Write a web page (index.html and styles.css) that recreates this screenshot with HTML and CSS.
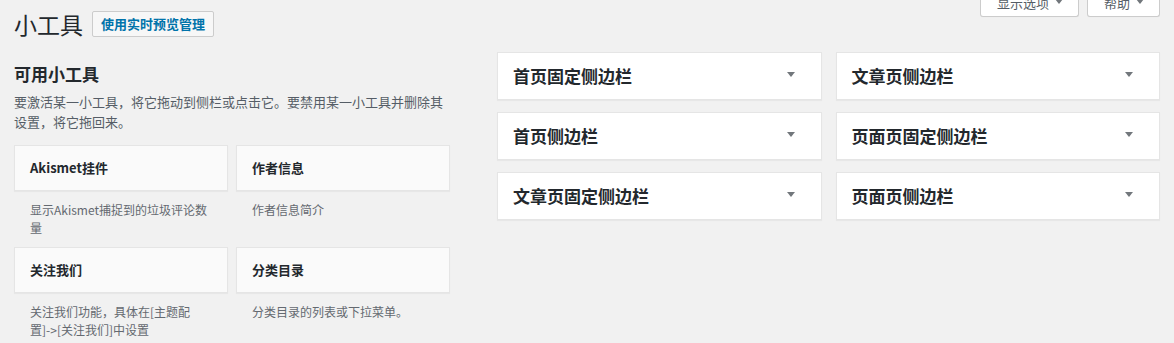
FILE: index.html
```html
<!DOCTYPE html>
<html lang="zh-CN">
<head>
<meta charset="utf-8">
<title>小工具</title>
<link rel="stylesheet" href="styles.css">
</head>
<body>
<div class="wrap">
  <div class="meta-links">
    <button class="meta-tab">显示选项<svg class="tab-arrow" viewBox="0 0 8 5" width="8" height="5"><polygon points="0,0 8,0 4,5"/></svg></button>
    <button class="meta-tab">帮助<svg class="tab-arrow" viewBox="0 0 8 5" width="8" height="5"><polygon points="0,0 8,0 4,5"/></svg></button>
  </div>
  <div class="page-header">
    <h1 class="page-title">小工具</h1>
    <a class="title-action" href="#">使用实时预览管理</a>
  </div>

  <div class="widgets-layout">
    <section class="available">
      <h2 class="section-title">可用小工具</h2>
      <p class="section-desc">要激活某一小工具，将它拖动到侧栏或点击它。要禁用某一小工具并删除其设置，将它拖回来。</p>
      <div class="widget-list">
        <div class="widget">
          <h3 class="widget-title">Akismet挂件</h3>
          <p class="widget-desc">显示Akismet捕捉到的垃圾评论数量</p>
        </div>
        <div class="widget">
          <h3 class="widget-title">作者信息</h3>
          <p class="widget-desc">作者信息简介</p>
        </div>
        <div class="widget">
          <h3 class="widget-title">关注我们</h3>
          <p class="widget-desc">关注我们功能，具体在[主题配<br>置]-&gt;[关注我们]中设置</p>
        </div>
        <div class="widget">
          <h3 class="widget-title">分类目录</h3>
          <p class="widget-desc">分类目录的列表或下拉菜单。</p>
        </div>
      </div>
    </section>

    <section class="sidebars">
      <div class="sidebar-box"><h2 class="sidebar-name">首页固定侧边栏</h2><svg class="sb-arrow" viewBox="0 0 8 5" width="8" height="5"><polygon points="0,0 8,0 4,5"/></svg></div>
      <div class="sidebar-box"><h2 class="sidebar-name">文章页侧边栏</h2><svg class="sb-arrow" viewBox="0 0 8 5" width="8" height="5"><polygon points="0,0 8,0 4,5"/></svg></div>
      <div class="sidebar-box"><h2 class="sidebar-name">首页侧边栏</h2><svg class="sb-arrow" viewBox="0 0 8 5" width="8" height="5"><polygon points="0,0 8,0 4,5"/></svg></div>
      <div class="sidebar-box"><h2 class="sidebar-name">页面页固定侧边栏</h2><svg class="sb-arrow" viewBox="0 0 8 5" width="8" height="5"><polygon points="0,0 8,0 4,5"/></svg></div>
      <div class="sidebar-box"><h2 class="sidebar-name">文章页固定侧边栏</h2><svg class="sb-arrow" viewBox="0 0 8 5" width="8" height="5"><polygon points="0,0 8,0 4,5"/></svg></div>
      <div class="sidebar-box"><h2 class="sidebar-name">页面页侧边栏</h2><svg class="sb-arrow" viewBox="0 0 8 5" width="8" height="5"><polygon points="0,0 8,0 4,5"/></svg></div>
    </section>
  </div>
</div>
</body>
</html>
```

FILE: styles.css
```css
* { box-sizing: border-box; }

html, body {
  margin: 0;
  padding: 0;
  background: #f1f1f1;
  color: #23282d;
  font-family: "Noto Sans CJK SC", "Liberation Sans", sans-serif;
  font-size: 13px;
  overflow: hidden;
}

.wrap {
  padding: 0 14px;
}

.meta-links {
  float: right;
  display: flex;
  gap: 8px;
  margin-top: -11px;
}

.meta-tab {
  display: flex;
  align-items: center;
  height: 28px;
  padding: 0 15px 1px 16px;
  margin: 0;
  background: #fff;
  border: 1px solid #ccc;
  border-top: none;
  border-radius: 0 0 3px 3px;
  box-shadow: 0 1px 1px -1px rgba(0,0,0,.1);
  color: #555d66;
  font-family: inherit;
  font-size: 13px;
  line-height: 27px;
  gap: 6px;
}

.tab-arrow { fill: #72777c; margin-top: -2px; }

.page-header {
  display: flex;
  align-items: center;
  gap: 9px;
  padding-top: 10px;
}

.page-title {
  margin: 0;
  font-size: 23px;
  font-weight: 400;
  line-height: 29px;
  color: #23282d;
}

.title-action {
  display: block;
  padding: 4px 8px;
  border: 1px solid #ccc;
  border-radius: 2px;
  background: #f7f7f7;
  color: #0073aa;
  font-size: 13px;
  font-weight: 700;
  line-height: 16px;
  text-decoration: none;
  margin-top: -2px;
}

.widgets-layout {
  display: flex;
  gap: 47px;
  margin-top: 13px;
}

.available {
  width: 436px;
  flex: none;
}

.section-title {
  margin: 10px 0 0;
  font-size: 17px;
  font-weight: 700;
  line-height: 24px;
  color: #23282d;
}

.section-desc {
  margin: 6px 0 0;
  font-size: 13px;
  line-height: 20px;
  color: #555d66;
}

.widget-list {
  display: grid;
  grid-template-columns: 214px 214px;
  column-gap: 8px;
  margin-top: 13px;
}

.widget-title {
  margin: 0;
  padding: 15px 15px;
  background: #fafafa;
  border: 1px solid #e5e5e5;
  box-shadow: 0 1px 1px rgba(0,0,0,.04);
  font-size: 13px;
  font-weight: 700;
  line-height: 14px;
  color: #23282d;
}

.widget-desc {
  margin: 0;
  padding: 10px 18px 10px 16px;
  font-size: 12px;
  line-height: 18px;
  color: #646970;
}

.sidebars {
  flex: 1;
  display: grid;
  grid-template-columns: 1fr 1fr;
  column-gap: 14px;
  row-gap: 12px;
  align-content: start;
}

.sidebar-box {
  display: flex;
  align-items: center;
  justify-content: space-between;
  height: 48px;
  padding: 0 26px 0 15px;
  background: #fff;
  border: 1px solid #e5e5e5;
  box-shadow: 0 1px 1px rgba(0,0,0,.04);
}

.sidebar-name {
  margin: 0;
  font-size: 17px;
  font-weight: 700;
  line-height: 24px;
  color: #23282d;
}

.sb-arrow { fill: #72777c; margin-top: -3px; }
```
